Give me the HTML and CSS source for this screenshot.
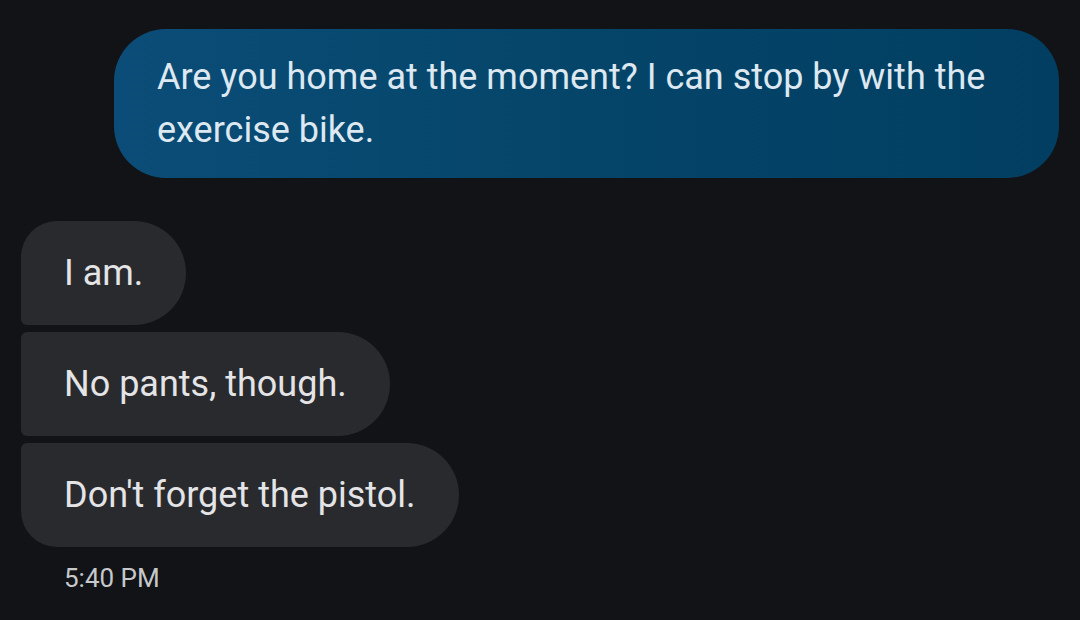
FILE: index.html
```html
<!DOCTYPE html>
<html>
<head>
<meta charset="utf-8">
<link rel="stylesheet" href="styles.css">
</head>
<body>
<div class="thread">
  <div class="row out">
    <div class="bubble sent">Are you home at the moment? I can stop by with the exercise bike.</div>
  </div>
  <div class="group">
    <div class="bubble recv first">I am.</div>
    <div class="bubble recv mid">No pants, though.</div>
    <div class="bubble recv last">Don't forget the pistol.</div>
  </div>
  <div class="time">5:40 PM</div>
</div>
</body>
</html>
```
FILE: styles.css
```css
html, body {
  margin: 0;
  padding: 0;
  background: #111316;
  width: 1080px;
  height: 620px;
  overflow: hidden;
}
.thread {
  font-family: Roboto, "Noto Sans", sans-serif;
  padding: 29px 21px 0 21px;
  display: flex;
  flex-direction: column;
}
.row.out {
  display: flex;
  justify-content: flex-end;
}
.bubble {
  font-size: 36px;
  line-height: 53px;
  padding: 26px 43px 25px 43px;
  box-sizing: border-box;
}
.sent {
  width: 945px;
  background: linear-gradient(90deg, #0b4d78 0%, #054569 50%, #013e62 100%);
  color: #dde8f1;
  border-radius: 52px;
  padding: 22px 43px 21px 43px;
}
.group {
  margin-top: 43px;
  display: flex;
  flex-direction: column;
  align-items: flex-start;
  gap: 7px;
}
.recv {
  background: #282a2e;
  color: #e4e4e6;
  height: 104px;
}
.first { border-radius: 36px 52px 52px 6px; }
.mid { border-radius: 6px 52px 52px 6px; }
.last { border-radius: 6px 52px 52px 36px; }
.time {
  margin-top: 16px;
  padding-left: 43px;
  font-size: 26px;
  color: #c6c8cb;
}
```
